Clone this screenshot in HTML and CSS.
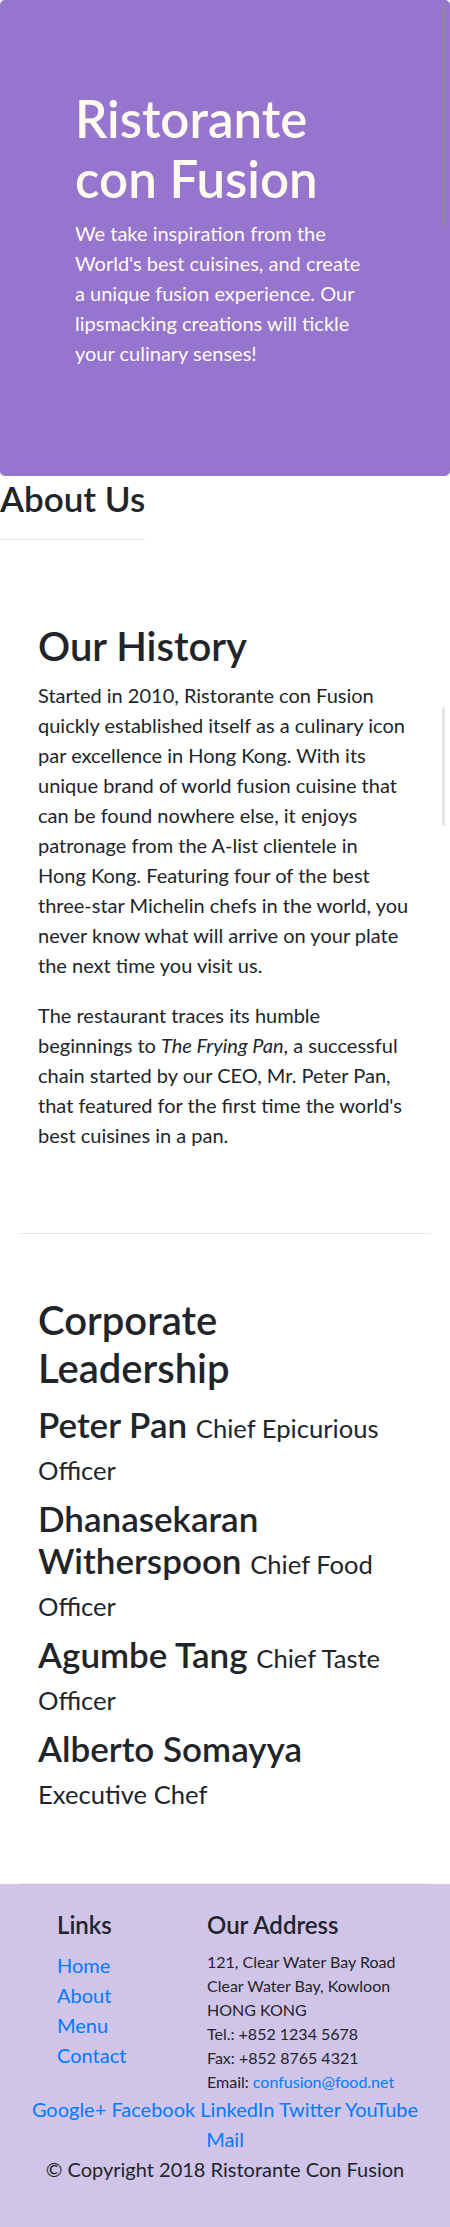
FILE: index.html
```html
<!DOCTYPE html>
<html lang="en">
<head>
<meta charset="utf-8">
<title>Ristorante con Fusion: About Us</title>
<link rel="stylesheet" href="styles.css">
</head>
<body>
<div class="page">
  <header class="hero">
    <div class="hero-inner">
      <h1 class="hero-title">Ristorante con Fusion</h1>
      <p class="hero-lead">We take inspiration from the World's best cuisines, and create a unique fusion experience. Our lipsmacking creations will tickle your culinary senses!</p>
    </div>
  </header>

  <div class="about-head">
    <h2 class="about-title">About Us</h2>
    <hr class="about-rule">
  </div>

  <section class="row-content history">
    <h1 class="section-title">Our History</h1>
    <p class="body-text">Started in 2010, Ristorante con Fusion quickly established itself as a culinary icon par excellence in Hong&nbsp;Kong. With its unique brand of world fusion cuisine that can be found nowhere else, it enjoys patronage from the A-list clientele in Hong&nbsp;Kong. Featuring four of the best three-star Michelin chefs in the world, you never know what will arrive on your plate the next time you visit us.</p>
    <p class="body-text">The restaurant traces its humble beginnings to <em>The Frying Pan</em>, a successful chain started by our CEO, Mr. Peter Pan, that featured for the first time the world's best cuisines in a pan.</p>
  </section>

  <section class="row-content leaders">
    <h1 class="section-title leaders-title">Corporate Leadership</h1>
    <h2 class="leader">Peter Pan <small class="leader-role">Chief Epicurious Officer</small></h2>
    <h2 class="leader">Dhanasekaran Witherspoon <small class="leader-role">Chief Food Officer</small></h2>
    <h2 class="leader">Agumbe Tang <small class="leader-role">Chief Taste Officer</small></h2>
    <h2 class="leader">Alberto Somayya <small class="leader-role">Executive Chef</small></h2>
  </section>

  <footer class="footer">
    <div class="footer-cols">
      <div class="footer-links">
        <h4 class="footer-head">Links</h4>
        <ul class="link-list">
          <li><a href="#">Home</a></li>
          <li><a href="#">About</a></li>
          <li><a href="#">Menu</a></li>
          <li><a href="#">Contact</a></li>
        </ul>
      </div>
      <div class="footer-address">
        <h4 class="footer-head">Our Address</h4>
        <address class="address">
          121, Clear Water Bay Road<br>
          Clear Water Bay, Kowloon<br>
          HONG KONG<br>
          Tel.: +852 1234 5678<br>
          Fax: +852 8765 4321<br>
          Email: <a href="#">confusion@food.net</a>
        </address>
      </div>
    </div>
    <div class="social">
      <a href="#">Google+</a>
      <a href="#">Facebook</a>
      <a href="#">LinkedIn</a>
      <a href="#">Twitter</a>
      <a href="#">YouTube</a>
      <a href="#">Mail</a>
    </div>
    <p class="copyright">© Copyright 2018 Ristorante Con Fusion</p>
  </footer>

  <div class="scroll-thumb thumb-hero"></div>
  <div class="scroll-thumb thumb-text"></div>
</div>
</body>
</html>
```
FILE: styles.css
```css
html, body {
  margin: 0;
  padding: 0;
}

body {
  font-family: Lato, "Liberation Sans", sans-serif;
  color: #212529;
  background: #ffffff;
}

a {
  color: #007bff;
  text-decoration: none;
}

.page {
  position: relative;
  min-height: 2227px;
  display: flex;
  flex-direction: column;
}

/* hero */
.hero {
  background: #9575cd;
  color: #fffaf0;
  border-radius: 5px;
  padding: 89px 79px 108px 75px;
}

.hero-title {
  margin: 0 0 9px;
  font-size: 51px;
  line-height: 60px;
  font-weight: 600;
}

.hero-lead {
  margin: 0;
  font-size: 20px;
  line-height: 30px;
  font-weight: 400;
}

/* about heading */
.about-head {
  align-self: flex-start;
}

.about-title {
  margin: 2px 0 0;
  font-size: 35px;
  line-height: 40px;
  font-weight: 600;
}

.about-rule {
  margin: 21px 0 0;
  height: 0;
  border: 0;
  border-top: 1px solid #e6e6e6;
}

/* content rows */
.row-content {
  margin: 0 19px;
  padding: 0 15px 0 19px;
  border-bottom: 1px solid #e9e9e9;
}

.history {
  padding-top: 82px;
  padding-bottom: 83px;
}

.leaders {
  padding-top: 62px;
  padding-bottom: 62px;
}

.section-title {
  margin: 0 0 10px;
  font-size: 40px;
  line-height: 48px;
  font-weight: 600;
}

.leaders-title {
  margin-bottom: 11px;
}

.body-text {
  margin: 0 0 20px;
  font-size: 20px;
  line-height: 30px;
}

.body-text:last-child {
  margin-bottom: 0;
}

.leader {
  margin: 0 0 10px;
  font-size: 35px;
  line-height: 42px;
  font-weight: 600;
}

.leader-role {
  font-size: 25.6px;
  font-weight: 400;
  line-height: 1;
}

/* footer */
.footer {
  flex: 1;
  background: #d1c4e9;
  padding: 26px 0 43px;
}

.footer-cols {
  display: flex;
  padding-left: 57px;
}

.footer-links {
  width: 150px;
  flex: none;
}

.footer-address {
  flex: 1;
}

.footer-head {
  margin: 0 0 11px;
  font-size: 24px;
  line-height: 29px;
  font-weight: 600;
}

.link-list {
  list-style: none;
  margin: 0;
  padding: 0;
  font-size: 20px;
  line-height: 30px;
}

.address {
  font-style: normal;
  font-size: 16px;
  line-height: 24px;
}

.social {
  padding: 0 20px;
  text-align: center;
  font-size: 20px;
  line-height: 30px;
}

.copyright {
  margin: 0;
  text-align: center;
  font-size: 20px;
  line-height: 30px;
}

/* overlay scrollbar thumbs seen in the capture */
.scroll-thumb {
  position: absolute;
  left: 442px;
  width: 3px;
  border-radius: 2px;
}

.thumb-hero {
  top: 5px;
  height: 220px;
  background: #8e889a;
}

.thumb-text {
  top: 707px;
  height: 119px;
  background: #e6e6e6;
}
```
